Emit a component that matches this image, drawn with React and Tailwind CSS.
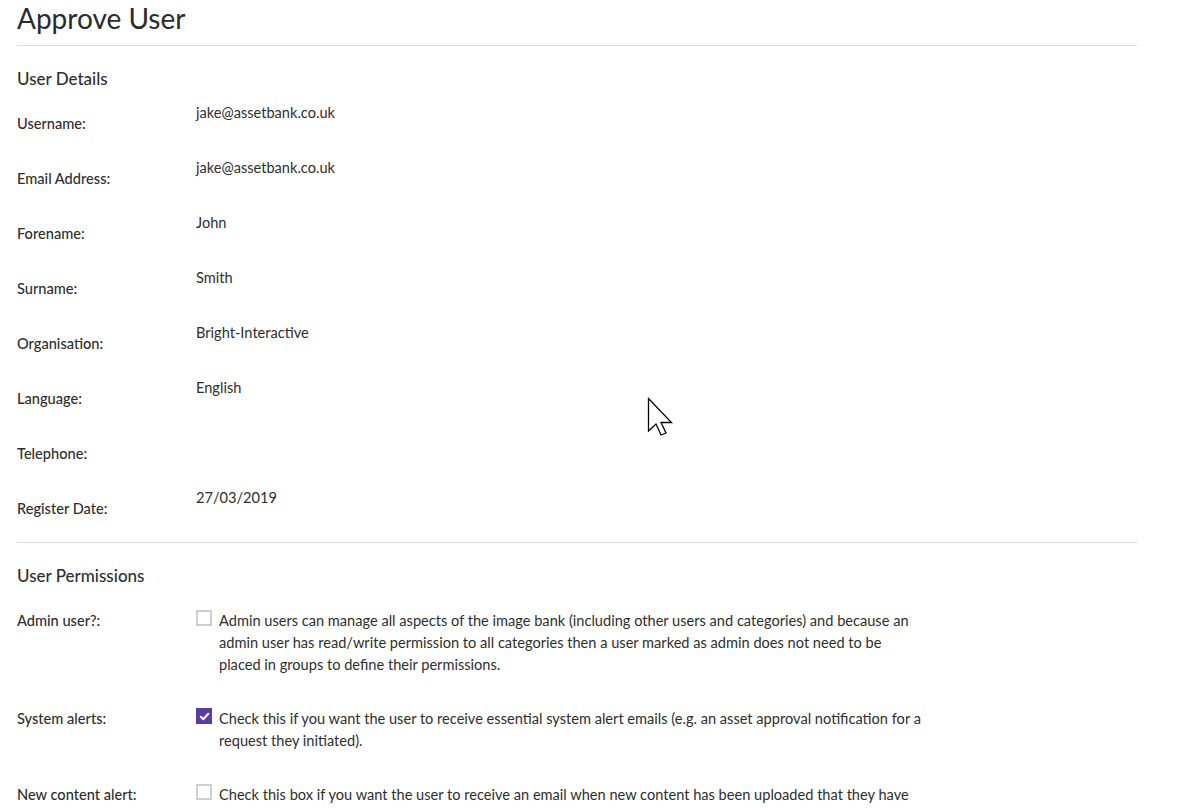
const details = [
  ['Username:', 'jake@assetbank.co.uk'],
  ['Email Address:', 'jake@assetbank.co.uk'],
  ['Forename:', 'John'],
  ['Surname:', 'Smith'],
  ['Organisation:', 'Bright-Interactive'],
  ['Language:', 'English'],
  ['Telephone:', ''],
  ['Register Date:', '27/03/2019'],
]

const permissions = [
  {
    label: 'Admin user?:',
    checked: false,
    text: 'Admin users can manage all aspects of the image bank (including other users and categories) and because an admin user has read/write permission to all categories then a user marked as admin does not need to be placed in groups to define their permissions.',
  },
  {
    label: 'System alerts:',
    checked: true,
    text: 'Check this if you want the user to receive essential system alert emails (e.g. an asset approval notification for a request they initiated).',
  },
  {
    label: 'New content alert:',
    checked: false,
    text: 'Check this box if you want the user to receive an email when new content has been uploaded that they have permission to view.',
  },
]

function Checkbox({ checked }) {
  if (checked) {
    return (
      <span className="flex h-4 w-4 flex-shrink-0 items-center justify-center bg-[#5a3ca8]">
        <svg viewBox="0 0 16 16" className="h-[11px] w-[11px]" fill="none">
          <path d="M2.5 8.5 L6.2 12 L13.5 4" stroke="white" strokeWidth="3" strokeLinecap="round" strokeLinejoin="round" />
        </svg>
      </span>
    )
  }
  return <span className="block h-4 w-4 flex-shrink-0 border-2 border-[#cfcfcf] bg-white" />
}

export default function App() {
  return (
    <div className="relative h-[808px] overflow-hidden bg-white text-[#2e2e2e] font-['Lato','Open_Sans',sans-serif]">
      <div className="ml-[17px] w-[1120px]">
        {/* Titulo */}
        <h1 className="text-[28px] leading-[36px] font-normal text-[#2b2b2b]">Approve User</h1>
        <hr className="mt-[9px] border-t border-[#dcdcdc]" />

        {/* Dados do usuario */}
        <h2 className="mt-[21px] text-[17px] leading-[24px] font-medium">User Details</h2>
        <div className="mt-[11px]">
          {details.map(([label, value]) => (
            <div key={label} className="flex h-[55px]">
              <div className="w-[179px] pt-[11px] text-[14.6px] leading-[22px] font-medium">{label}</div>
              <div className="text-[14.6px] leading-[22px]">{value}</div>
            </div>
          ))}
        </div>
        <hr className="border-t border-[#dcdcdc]" />

        {/* Permissoes */}
        <h2 className="mt-[21px] text-[17px] leading-[24px] font-medium">User Permissions</h2>
        <div className="mt-[22px]">
          {permissions.map((p) => (
            <div key={p.label} className="mb-[32px] flex">
              <div className="w-[179px] text-[14.6px] leading-[22px] font-medium">{p.label}</div>
              <div className="flex gap-[7px]">
                <Checkbox checked={p.checked} />
                <p className="w-[705px] text-[14.6px] leading-[22px]">{p.text}</p>
              </div>
            </div>
          ))}
        </div>
      </div>

      {/* Cursor do mouse */}
      <svg className="absolute left-[647px] top-[397px]" width="27" height="40" viewBox="0 0 27 40" fill="none">
        <path d="M1.5 1.5 L1.5 34 L9 27 L14 38 L19 36 L14 25.5 L24.5 25.5 Z" fill="white" stroke="black" strokeWidth="1.3" strokeLinejoin="miter" />
      </svg>
    </div>
  )
}
